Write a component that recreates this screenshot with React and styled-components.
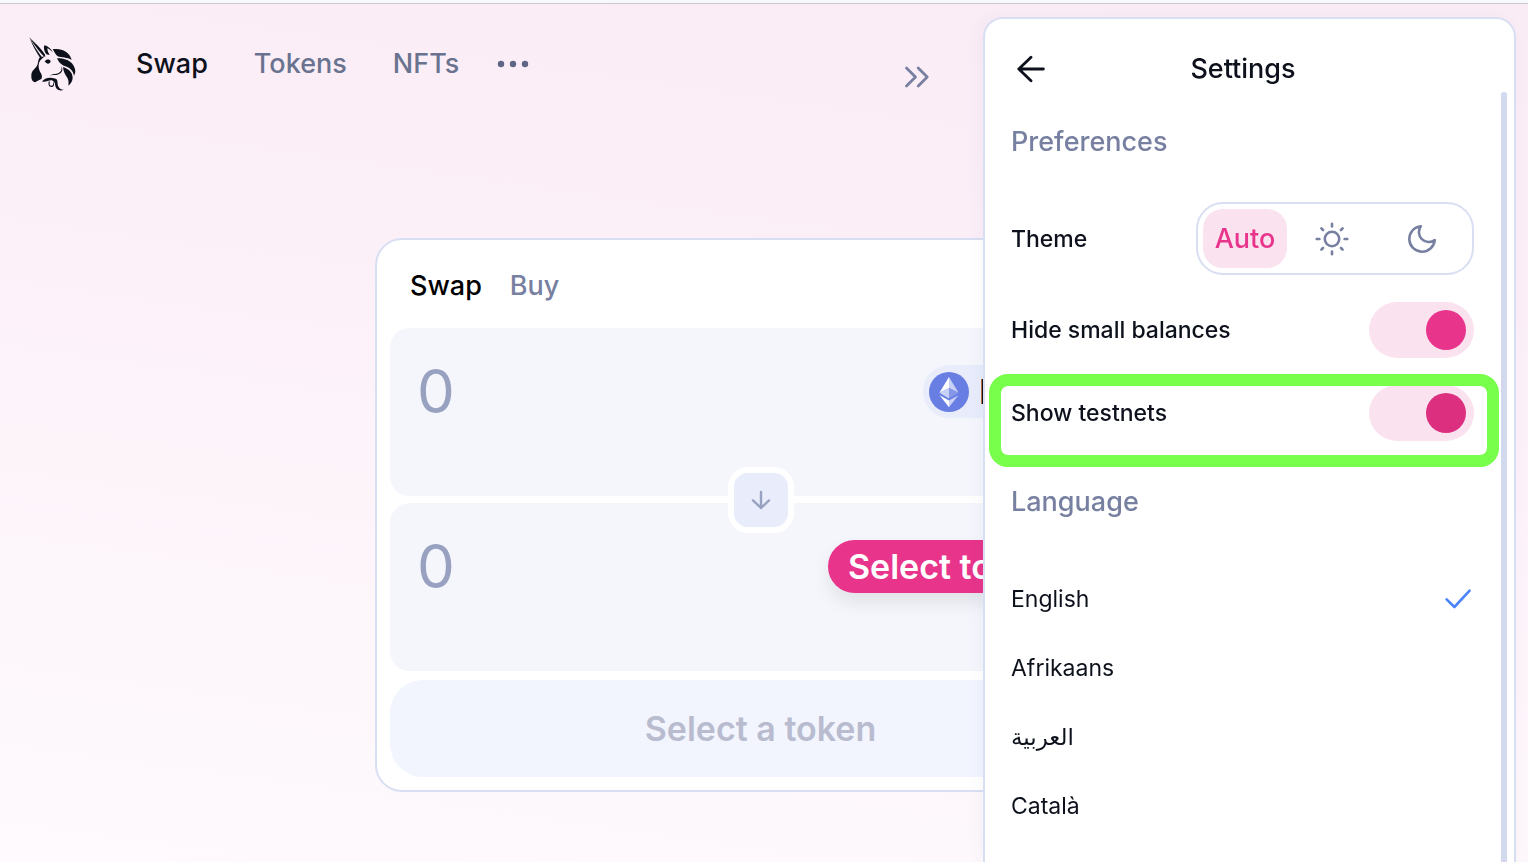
import React, { useState } from "react";
import styled, { createGlobalStyle, ThemeProvider } from "styled-components";

const theme = {
  ink: "#0d111c",
  muted: "#7780a0",
  mutedDark: "#69738f",
  faint: "#98a1c0",
  line: "#d9dff3",
  pink: "#e8348b",
  pinkSoft: "#fae2ef",
  module: "#f5f6fc",
  chip: "#e8ecfb",
};

const GlobalStyle = createGlobalStyle`
  *, *::before, *::after { box-sizing: border-box; }
  body {
    margin: 0;
    font-family: Inter, "Noto Sans", "DejaVu Sans", sans-serif;
    color: ${theme.ink};
  }
  button, input { font: inherit; color: inherit; }
  button { border: 0; padding: 0; background: none; cursor: pointer; }
`;

const Page = styled.div`
  min-height: 100vh;
  overflow: hidden;
  border-top: 3px solid #f8f9fc;
  background: linear-gradient(188deg, #faecf5 0%, #fbeef7 25%, #fdf3fa 55%, #fdf7fb 78%, #fefafd 100%);
`;

const TopLine = styled.div`
  height: 1px;
  background: #c9c8d0;
`;

const Header = styled.header`
  display: flex;
  align-items: center;
  gap: 48px;
  height: 120px;
  padding: 0 16px;
`;

const Nav = styled.nav`
  display: flex;
  align-items: center;
  gap: 46px;
`;

const NavLink = styled.a`
  font-size: 27px;
  line-height: 32px;
  font-weight: 500;
  text-decoration: none;
  color: ${(p) => (p.$active ? p.theme.ink : p.theme.mutedDark)};
`;

const MoreButton = styled.button`
  display: flex;
  margin-left: -8px;
`;

const Main = styled.main`
  display: flex;
  justify-content: center;
  padding: 114px 7px 70px 0;
`;

const Card = styled.section`
  display: flex;
  flex-direction: column;
  width: 100%;
  max-width: 771px;
  padding: 13px;
  border: 2px solid ${(p) => p.theme.line};
  border-radius: 27px;
  background: #fff;
`;

const Tabs = styled.div`
  display: flex;
  align-items: center;
  gap: 28px;
  height: 75px;
  padding: 0 20px 10px;
`;

const Tab = styled.button`
  font-size: 27px;
  line-height: 32px;
  font-weight: 500;
  color: ${(p) => (p.$active ? "#000" : p.theme.muted)};
`;

const TokenPanel = styled.div`
  display: flex;
  align-items: flex-start;
  justify-content: space-between;
  height: 168px;
  padding: 37px 27px;
  border-radius: 20px;
  background: ${(p) => p.theme.module};
`;

const Amount = styled.input`
  flex: 1;
  min-width: 0;
  height: 52px;
  padding: 0;
  border: 0;
  outline: 0;
  background: none;
  font-size: 60px;
  line-height: 52px;
  &::placeholder { color: ${(p) => p.theme.faint}; opacity: 1; }
`;

const TokenButton = styled.button`
  display: flex;
  align-items: center;
  gap: 10px;
  height: 53px;
  padding: 0 ${(p) => (p.$primary ? 20 : 6)}px;
  width: ${(p) => (p.$primary ? 276 : 181)}px;
  border-radius: 27px;
  font-size: 34px;
  font-weight: 600;
  white-space: nowrap;
  color: ${(p) => (p.$primary ? "#fff" : p.theme.ink)};
  background: ${(p) => (p.$primary ? p.theme.pink : p.theme.chip)};
  box-shadow: ${(p) => (p.$primary ? "0 10px 18px rgba(0, 0, 0, 0.08)" : "none")};
`;

const FlipButton = styled.button`
  position: relative;
  z-index: 1;
  display: flex;
  align-items: center;
  justify-content: center;
  align-self: center;
  width: 66px;
  height: 66px;
  margin: -29px 0 -30px;
  border: 6px solid #fff;
  border-radius: 20px;
  background: ${(p) => p.theme.chip};
`;

const SubmitButton = styled.button`
  height: 97px;
  margin-top: 9px;
  border-radius: 33px;
  font-size: 34px;
  font-weight: 600;
  color: #b9bccf;
  background: #f2f5fe;
`;

const Drawer = styled.aside`
  position: fixed;
  top: 17px;
  right: 12px;
  bottom: 0;
  display: flex;
  align-items: flex-start;
`;

const CollapseButton = styled.button`
  display: flex;
  margin: 49px 53px 0 0;
`;

const Sheet = styled.div`
  display: flex;
  flex-direction: column;
  width: 533px;
  height: 100%;
  padding-top: 27px;
  border: 2px solid ${(p) => p.theme.line};
  border-bottom: 0;
  border-radius: 20px 20px 0 0;
  background: #fff;
  box-shadow: -4px 0 16px rgba(60, 70, 120, 0.04);
`;

const SheetHeader = styled.div`
  display: grid;
  grid-template-columns: 28px 1fr 28px;
  align-items: center;
  height: 46px;
  margin: 0 45px 0 32px;
`;

const BackButton = styled.button`
  display: flex;
`;

const SheetTitle = styled.h1`
  margin: 0;
  font-size: 27px;
  line-height: 32px;
  font-weight: 500;
  text-align: center;
`;

const SheetBody = styled.div`
  display: flex;
  flex: 1;
  min-height: 0;
`;

const Content = styled.div`
  flex: 1;
  min-width: 0;
  overflow: hidden;
  padding: 34px 2px 0 26px;
`;

const Scrollbar = styled.div`
  width: 6px;
  margin: 0 7px 0 0;
  border-radius: 3px 3px 0 0;
  background: #d2d9ee;
`;

const SectionTitle = styled.h2`
  margin: 0 0 44px;
  font-size: 27px;
  line-height: 32px;
  font-weight: 500;
  color: ${(p) => p.theme.muted};
`;

const Settings = styled.div`
  display: flex;
  flex-direction: column;
  gap: 27px;
  margin: 0 25px 45px 0;
`;

const SettingRow = styled.div`
  position: relative;
  display: flex;
  align-items: center;
  justify-content: space-between;
  font-size: 23px;
  line-height: 28px;
  font-weight: 500;
`;

const Highlight = styled.div`
  position: absolute;
  inset: -11px -25px -26px -22px;
  border: 12px solid #78ff4c;
  border-radius: 19px;
  pointer-events: none;
`;

const ThemeSwitch = styled.div`
  display: flex;
  height: 73px;
  padding: 5px;
  border: 2px solid ${(p) => p.theme.line};
  border-radius: 27px;
`;

const ThemeOption = styled.button`
  display: flex;
  align-items: center;
  justify-content: center;
  width: ${(p) => (p.$text ? 84 : 90)}px;
  border-radius: 20px;
  font-size: 27px;
  color: ${(p) => (p.$active ? p.theme.pink : p.theme.muted)};
  background: ${(p) => (p.$active ? p.theme.pinkSoft : "transparent")};
`;

const Toggle = styled.input.attrs({ type: "checkbox" })`
  appearance: none;
  display: flex;
  align-items: center;
  justify-content: flex-start;
  width: 105px;
  height: 56px;
  margin: 0;
  padding: 0 8px;
  border-radius: 28px;
  background: ${(p) => p.theme.module};
  cursor: pointer;
  &::before {
    content: "";
    width: 40px;
    height: 40px;
    border-radius: 50%;
    background: ${(p) => p.theme.faint};
  }
  &:checked { justify-content: flex-end; background: ${(p) => p.theme.pinkSoft}; }
  &:checked::before { background: ${(p) => (p.$hovered ? "#dc2f7f" : p.theme.pink)}; }
`;

const LanguageList = styled.ul`
  margin: 0 25px 0 0;
  padding: 2px 0 0;
  list-style: none;
`;

const LanguageButton = styled.button`
  display: flex;
  align-items: center;
  justify-content: space-between;
  width: 100%;
  height: 69px;
  padding-right: 3px;
  font-size: 23px;
  line-height: 28px;
`;

const Unicorn = () => (
  <svg width="72" height="72" viewBox="0 -4 216 216" fill={theme.ink} role="img" aria-label="Uniswap">
    <path d="M40 24 C54 39 77 58 88 78 L84 82 C76 73 58 53 40 24Z" />
    <path d="M40 24 C49 47 59 65 73 87 L78 84 C65 67 52 47 40 24Z" />
    <path d="M85 48 C95 50 105 58 111 70 C105 63 98 58 94 57 C94 64 97 71 101 77 L91 75 C84 66 82 55 85 48Z" />
    <path d="M72 84 L90 80 C80 85 72 92 69 101 C67 110 68 119 72 127 C77 134 80 141 76 149 C70 153 64 154 58 159 C49 158 45 149 46 137 C47 122 60 119 65 105 C67 96 67 88 72 84Z" />
    <path d="M88 95 C91 89 102 89 104 96 C103 102 97 105 92 102 C89 100 89 98 85 96Z" />
    <path d="M110 60 C135 56 160 66 167 92 C154 83 137 86 125 81 C118 76 115 67 110 60Z" />
    <path d="M123 87 C142 87 169 91 177 119 C179 127 177 134 174 139 C171 120 158 113 143 109 C134 105 127 97 123 87Z" />
    <path d="M141 113 C158 119 170 128 170 146 C169 157 164 164 157 169 C159 157 157 149 151 141 C146 133 142 125 141 113Z" />
    <path d="M136 111 C144 123 136 135 121 137 C113 137 107 136 101 140 C108 132 119 136 128 131 C136 127 138 121 136 111Z" />
    <path d="M78 157 C86 143 104 143 119 148 C128 152 122 163 128 173 C132 180 138 182 144 181 C130 187 120 180 118 170 C117 162 116 157 110 154 C101 150 94 159 78 157Z" />
    <path d="M99 156 C95 165 99 173 106 173 C114 173 117 163 111 157 C113 164 111 169 106 169 C101 169 99 163 102 157Z" />
  </svg>
);

const Dots = () => (
  <svg width="32" height="8" viewBox="0 0 32 8" fill="#5d6785" aria-hidden="true">
    <circle cx="4" cy="4" r="3.2" />
    <circle cx="16" cy="4" r="3.2" />
    <circle cx="28" cy="4" r="3.2" />
  </svg>
);

const DoubleChevron = () => (
  <svg width="26" height="22" viewBox="0 0 26 22" fill="none" stroke={theme.muted} strokeWidth="2.8" strokeLinecap="round" strokeLinejoin="round" aria-hidden="true">
    <path d="M2.5 2 11.5 11 2.5 20M14.2 2 23.2 11 14.2 20" />
  </svg>
);

const EthIcon = () => (
  <svg width="40" height="40" viewBox="0 0 40 40" aria-hidden="true">
    <circle cx="20" cy="20" r="20" fill="#687ee3" />
    <path d="M20 5 10.4 20.8 20 16Z" fill="#fff" />
    <path d="M20 5 29.6 20.8 20 16Z" fill="#c9d0f5" />
    <path d="M20 16 10.4 20.8 20 26.4Z" fill="#c9d0f5" />
    <path d="M20 16 29.6 20.8 20 26.4Z" fill="#8797e7" />
    <path d="M10.6 23.2 20 28.6V35.2Z" fill="#fff" />
    <path d="M29.4 23.2 20 28.6V35.2Z" fill="#c9d0f5" />
  </svg>
);

const ArrowDown = () => (
  <svg width="20" height="20" viewBox="0 0 20 20" fill="none" stroke={theme.faint} strokeWidth="2.4" strokeLinecap="round" strokeLinejoin="round" aria-hidden="true">
    <path d="M10 2V18M2 10.4 10 18 18 10.4" />
  </svg>
);

const ArrowLeft = () => (
  <svg width="28" height="28" viewBox="0 0 28 28" fill="none" stroke={theme.ink} strokeWidth="2.8" strokeLinecap="round" strokeLinejoin="round" aria-hidden="true">
    <path d="M26.4 14H1.8M14 2.2 1.8 14 14 25.8" />
  </svg>
);

const SunIcon = () => (
  <svg width="34" height="34" viewBox="-17 -17 34 34" fill="none" stroke="currentColor" strokeWidth="2.6" strokeLinecap="round" aria-hidden="true">
    <circle r="7.2" />
    <path d="M0-15.3V-12.6M0 12.6V15.3M-15.3 0H-12.6M12.6 0H15.3M-10.6-10.6-9-9M10.6 10.6 9 9M-10.6 10.6-9 9M10.6-10.6 9-9" />
  </svg>
);

const MoonIcon = () => (
  <svg width="34" height="34" viewBox="0 0 24 24" fill="none" stroke="currentColor" strokeWidth="1.8" strokeLinecap="round" strokeLinejoin="round" aria-hidden="true">
    <path d="M21 12.79A9 9 0 1 1 11.21 3 7 7 0 0 0 21 12.79z" />
  </svg>
);

const CheckIcon = () => (
  <svg width="26" height="20" viewBox="0 0 26 20" fill="none" stroke="#4c82fb" strokeWidth="2.6" strokeLinecap="round" strokeLinejoin="round" aria-hidden="true">
    <path d="M1.6 10.4 9.4 18 24.6 1.6" />
  </svg>
);

const themes = [
  { id: "auto", label: "Auto" },
  { id: "light", label: "Light", icon: <SunIcon /> },
  { id: "dark", label: "Dark", icon: <MoonIcon /> },
];

const languages = [
  { code: "en", name: "English" },
  { code: "af", name: "Afrikaans" },
  { code: "ar", name: "العربية" },
  { code: "ca", name: "Català" },
];

function SwapCard() {
  return (
    <Card>
      <Tabs>
        <Tab $active>Swap</Tab>
        <Tab>Buy</Tab>
      </Tabs>
      <TokenPanel>
        <Amount placeholder="0" inputMode="decimal" aria-label="Amount to sell" />
        <TokenButton>
          <EthIcon />
          ETH
        </TokenButton>
      </TokenPanel>
      <FlipButton aria-label="Switch tokens">
        <ArrowDown />
      </FlipButton>
      <TokenPanel>
        <Amount placeholder="0" inputMode="decimal" aria-label="Amount to buy" />
        <TokenButton $primary>Select token</TokenButton>
      </TokenPanel>
      <SubmitButton>Select a token</SubmitButton>
    </Card>
  );
}

function SettingsDrawer() {
  const [mode, setMode] = useState("auto");
  const [language, setLanguage] = useState("en");
  return (
    <Drawer>
      <CollapseButton aria-label="Close drawer">
        <DoubleChevron />
      </CollapseButton>
      <Sheet>
        <SheetHeader>
          <BackButton aria-label="Back">
            <ArrowLeft />
          </BackButton>
          <SheetTitle>Settings</SheetTitle>
        </SheetHeader>
        <SheetBody>
          <Content>
            <SectionTitle>Preferences</SectionTitle>
            <Settings>
              <SettingRow>
                <span>Theme</span>
                <ThemeSwitch role="group" aria-label="Theme">
                  {themes.map((t) => (
                    <ThemeOption
                      key={t.id}
                      $text={!t.icon}
                      $active={mode === t.id}
                      aria-label={t.label}
                      aria-pressed={mode === t.id}
                      onClick={() => setMode(t.id)}
                    >
                      {t.icon || t.label}
                    </ThemeOption>
                  ))}
                </ThemeSwitch>
              </SettingRow>
              <SettingRow>
                <label htmlFor="hide-small">Hide small balances</label>
                <Toggle id="hide-small" defaultChecked />
              </SettingRow>
              <SettingRow>
                <label htmlFor="testnets">Show testnets</label>
                <Toggle id="testnets" defaultChecked $hovered />
                <Highlight />
              </SettingRow>
            </Settings>
            <SectionTitle>Language</SectionTitle>
            <LanguageList>
              {languages.map((l) => (
                <li key={l.code}>
                  <LanguageButton lang={l.code} onClick={() => setLanguage(l.code)}>
                    <span>{l.name}</span>
                    {language === l.code && <CheckIcon />}
                  </LanguageButton>
                </li>
              ))}
            </LanguageList>
          </Content>
          <Scrollbar />
        </SheetBody>
      </Sheet>
    </Drawer>
  );
}

export default function App() {
  return (
    <ThemeProvider theme={theme}>
      <GlobalStyle />
      <Page>
        <TopLine />
        <Header>
          <Unicorn />
          <Nav>
            <NavLink href="#swap" $active>Swap</NavLink>
            <NavLink href="#tokens">Tokens</NavLink>
            <NavLink href="#nfts">NFTs</NavLink>
            <MoreButton aria-label="More">
              <Dots />
            </MoreButton>
          </Nav>
        </Header>
        <Main>
          <SwapCard />
        </Main>
      </Page>
      <SettingsDrawer />
    </ThemeProvider>
  );
}
